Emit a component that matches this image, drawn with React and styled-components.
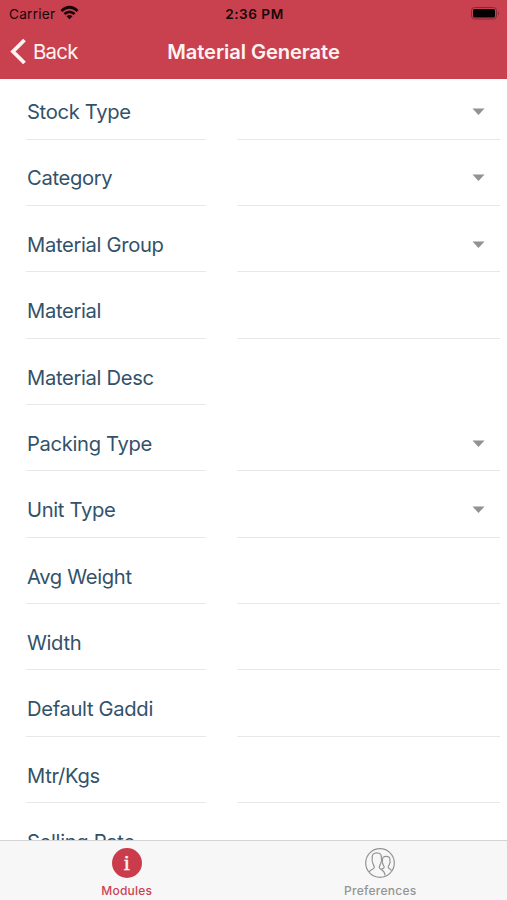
import React from 'react';
import styled, { createGlobalStyle } from 'styled-components';

const GlobalStyle = createGlobalStyle`
  * { box-sizing: border-box; }
  body { margin: 0; background: #fff; font-family: Inter, "Liberation Sans", sans-serif; }
`;

const Screen = styled.div`
  width: 507px;
  height: 900px;
  display: flex;
  flex-direction: column;
  overflow: hidden;
  background: #fff;
`;

const Header = styled.header`
  flex: none;
  height: 79px;
  background: #c9414f;
`;

const StatusBar = styled.div`
  height: 27px;
  padding: 0 7px 0 9px;
  display: grid;
  grid-template-columns: 1fr auto 1fr;
  align-items: center;
  color: #16070a;
`;

const Carrier = styled.div`
  display: flex;
  align-items: center;
  gap: 5px;
  font-size: 13.6px;
  letter-spacing: 0.25px;
  svg { margin-top: -2px; }
`;

const Time = styled.div`
  font-size: 13.6px;
  font-weight: 600;
  letter-spacing: 0.5px;
`;

const BatterySlot = styled.div`
  display: flex;
  justify-content: flex-end;
`;

const NavBar = styled.div`
  height: 49px;
  padding: 0 10px;
  display: grid;
  grid-template-columns: 1fr auto 1fr;
  align-items: center;
  color: #fff3f2;
`;

const BackButton = styled.button`
  display: flex;
  align-items: center;
  gap: 6px;
  padding: 0;
  border: 0;
  background: none;
  color: inherit;
  font: 400 20.4px Inter, "Liberation Sans", sans-serif;
  letter-spacing: -0.75px;
`;

const Title = styled.h1`
  margin: 0;
  font-size: 20.2px;
  font-weight: 600;
  letter-spacing: -0.1px;
`;

const Form = styled.main`
  flex: 1;
  min-height: 0;
  overflow: hidden;
  padding: 6.6px 7px 0 26px;
  display: flex;
  flex-direction: column;
  gap: 12.37px;
`;

const Row = styled.div`
  flex: none;
  height: 54px;
  display: grid;
  grid-template-columns: 180px 263px;
  column-gap: 31px;
`;

const Cell = styled.div`
  display: flex;
  align-items: center;
  border-bottom: 1px solid ${(p) => (p.$plain ? 'transparent' : '#e7e8e9')};
`;

const Label = styled(Cell)`
  padding: 0 0 1px 1px;
  color: #33526a;
  font-size: 20.2px;
  letter-spacing: -0.33px;
  white-space: nowrap;
`;

const Field = styled(Cell)`
  justify-content: flex-end;
  padding-right: 15px;
`;

const TabBar = styled.nav`
  flex: none;
  height: 60px;
  border-top: 1px solid #d2d3d4;
  background: #f7f7f7;
  display: grid;
  grid-template-columns: 1fr 1fr;
`;

const Tab = styled.div`
  display: flex;
  flex-direction: column;
  align-items: center;
  padding-top: 7px;
  color: ${(p) => (p.$active ? '#cb4253' : '#949494')};
`;

const TabLabel = styled.span`
  margin-top: 5px;
  font-size: 12px;
  line-height: 15px;
  font-weight: 500;
  letter-spacing: 0.25px;
`;

const InfoBadge = styled.span`
  width: 30px;
  height: 30px;
  border-radius: 50%;
  background: #ca3c4c;
  color: #fff3f2;
  display: flex;
  align-items: center;
  justify-content: center;
  font: 400 22px/28px "Liberation Serif", serif;
  -webkit-text-stroke: 0.5px currentColor;
`;

const WifiIcon = () => (
  <svg width="19" height="15" viewBox="0 0 19 15">
    <path d="M0.5 5Q9.5-3.3 18.5 5L16.7 6.9Q9.5 0.6 2.3 6.9Z" fill="#16070a" />
    <path d="M3.5 8.1Q9.5 2.8 15.5 8.1L13.7 10Q9.5 6.5 5.3 10Z" fill="#16070a" />
    <path d="M6.5 11.2Q9.5 8.7 12.5 11.2L9.5 14.3Z" fill="#16070a" />
  </svg>
);

const BatteryIcon = () => (
  <svg width="30" height="15" viewBox="0 0 30 15">
    <rect x="1.5" y="1.5" width="25" height="11.5" rx="3" fill="none" stroke="#832a34" />
    <rect x="3" y="3" width="22" height="8.5" rx="1.5" fill="#050102" />
    <path d="M28 5.2Q30 7.2 28 9.2Z" fill="#832a34" />
  </svg>
);

const BackIcon = () => (
  <svg width="17" height="27" viewBox="0 0 17 27">
    <path d="M14.5 2L3 13.5L14.5 25" fill="none" stroke="currentColor" strokeWidth="3.8" />
  </svg>
);

const CaretIcon = () => (
  <svg width="13" height="8" viewBox="0 0 13 8">
    <path d="M0.5 0.5H12.5L6.5 7Z" fill="#929292" />
  </svg>
);

const PeopleIcon = () => (
  <svg width="30" height="30" viewBox="0 0 30 30" fill="none" stroke="currentColor" strokeWidth="1.2">
    <circle cx="15" cy="15" r="14.3" />
    <path d="M4.3 24C5 21.4 9.3 21.6 9.3 19.2C9.3 17.6 7.8 16.6 7.5 14C6.6 12.6 7 11.2 7.3 10.4C6.7 6.6 8.6 4.8 11.8 4.8C15 4.8 16.9 6.6 16.3 10.4C16.6 11.2 17 12.6 16.1 14C15.8 16.6 14.3 17.6 14.3 19.2C14.3 22 19.8 21.4 20 27.6" />
    <path d="M16.3 21.2C17.6 20.6 19.2 20.6 19.2 19C19.2 17.9 18 17.2 17.8 15.6C17 14.6 17.2 13.4 17.5 12.8C17 9.8 18.4 8.3 21.2 8.3C24 8.3 25.4 9.8 24.9 12.8C25.2 13.4 25.4 14.6 24.6 15.6C24.4 17.2 23.2 17.9 23.2 19C23.2 20.8 25.6 20.7 26.4 22.7" />
  </svg>
);

const fields = [
  { label: 'Stock Type', select: true },
  { label: 'Category', select: true },
  { label: 'Material Group', select: true },
  { label: 'Material' },
  { label: 'Material Desc', plain: true },
  { label: 'Packing Type', select: true },
  { label: 'Unit Type', select: true },
  { label: 'Avg Weight' },
  { label: 'Width' },
  { label: 'Default Gaddi' },
  { label: 'Mtr/Kgs' },
  { label: 'Selling Rate' },
];

export default function App() {
  return (
    <>
      <GlobalStyle />
      <Screen>
        <Header>
          <StatusBar>
            <Carrier>Carrier <WifiIcon /></Carrier>
            <Time>2:36 PM</Time>
            <BatterySlot><BatteryIcon /></BatterySlot>
          </StatusBar>
          <NavBar>
            <BackButton><BackIcon />Back</BackButton>
            <Title>Material Generate</Title>
          </NavBar>
        </Header>
        <Form>
          {fields.map((f) => (
            <Row key={f.label}>
              <Label>{f.label}</Label>
              <Field $plain={f.plain}>{f.select && <CaretIcon />}</Field>
            </Row>
          ))}
        </Form>
        <TabBar>
          <Tab $active>
            <InfoBadge>i</InfoBadge>
            <TabLabel>Modules</TabLabel>
          </Tab>
          <Tab>
            <PeopleIcon />
            <TabLabel>Preferences</TabLabel>
          </Tab>
        </TabBar>
      </Screen>
    </>
  );
}
